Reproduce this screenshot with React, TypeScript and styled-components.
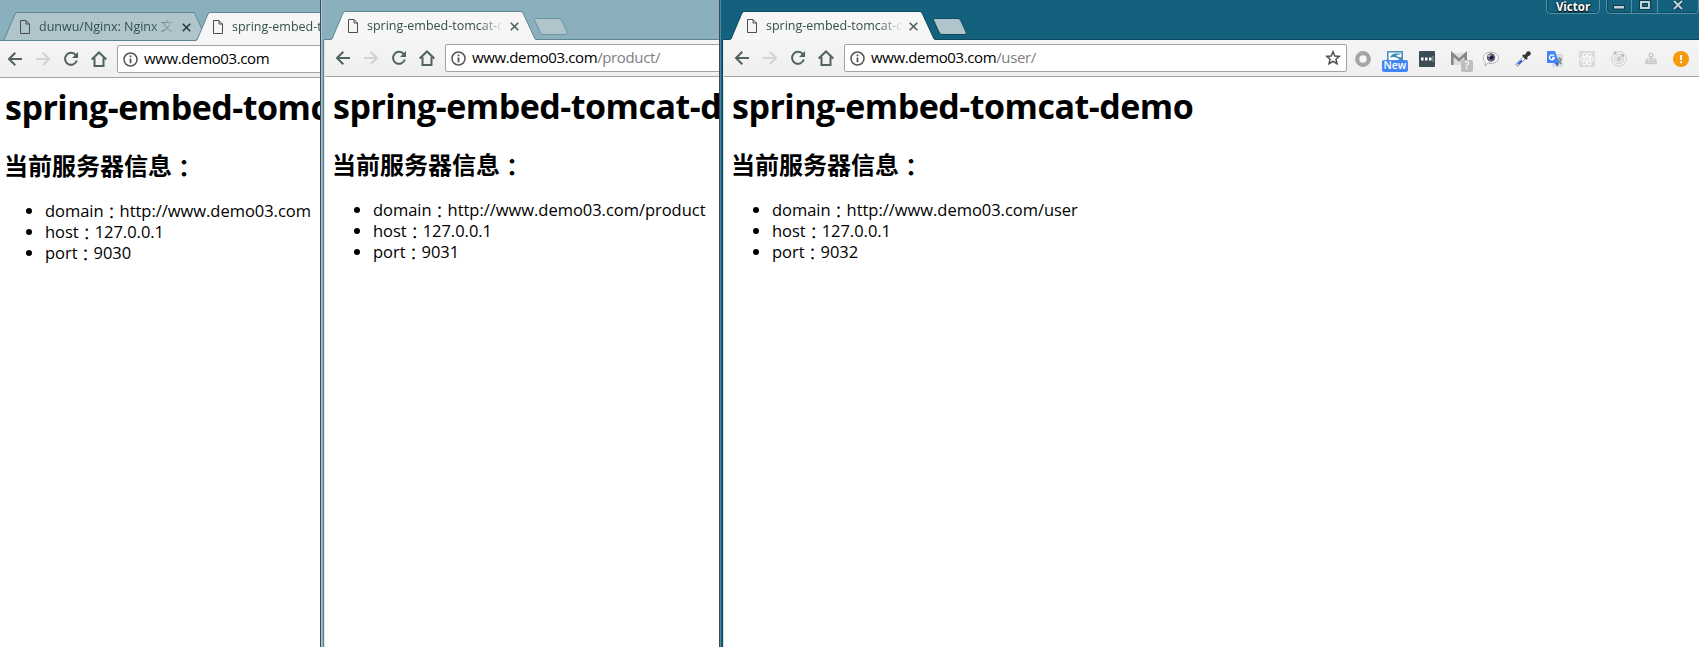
import React from 'react';
import styled, { createGlobalStyle } from 'styled-components';

const GlobalStyle = createGlobalStyle`
  * { box-sizing: border-box; }
  body { margin: 0; background: #fff; overflow: hidden; }
`;

const Desktop = styled.main`
  display: flex;
  width: 1699px;
  height: 647px;
  overflow: hidden;
  font-family: "Open Sans", "Noto Sans CJK TC", sans-serif;
  color: #000;
`;

const BrowserWindow = styled.section<{ $width: number; $edge: string; $shine?: string; $drop?: number }>`
  display: flex;
  flex: none;
  flex-direction: column;
  width: ${p => p.$width}px;
  overflow: hidden;
  background: ${p => p.$edge};
  padding-top: ${p => p.$drop || 0}px;
  border-left: ${p => (p.$shine ? '1px solid #3f4b50' : '0')};
  box-shadow: ${p => (p.$shine ? `inset 1px 0 0 ${p.$shine}` : 'none')};
`;

const TitleBar = styled.header<{ $start: number; $inset: number; $line: string }>`
  display: flex;
  flex: none;
  align-items: flex-end;
  height: 40px;
  margin-left: ${p => p.$inset}px;
  padding-left: ${p => p.$start}px;
  box-shadow: inset 0 -1px 0 ${p => p.$line};
`;

const Tab = styled.div<{ $overlap?: boolean }>`
  display: flex;
  flex: none;
  align-items: center;
  position: relative;
  width: 208px;
  height: 29px;
  padding: 1px 16px 0 18px;
  margin-left: ${p => (p.$overlap ? -15 : 0)}px;
`;

const TabShape = styled.svg`
  position: absolute;
  inset: 0;
`;

const TabIcon = styled.svg`
  position: relative;
  flex: none;
`;

const TabTitle = styled.span`
  position: relative;
  flex: none;
  width: 135px;
  margin-left: 9px;
  overflow: hidden;
  white-space: nowrap;
  font-size: 12.5px;
  line-height: 20px;
  color: #33504c;
  mask-image: linear-gradient(to right, #000 112px, transparent 137px);
`;

const CloseIcon = styled.svg`
  position: relative;
  flex: none;
  margin-left: 8px;
`;

const NewTab = styled.svg`
  flex: none;
  margin: 0 0 5px -5px;
`;

const WindowControls = styled.div`
  display: flex;
  align-self: flex-start;
  gap: 6px;
  margin-left: auto;
`;

const ControlGroup = styled.div<{ $width: number }>`
  display: flex;
  width: ${p => p.$width}px;
  height: 14px;
  border: 1px solid #5590a6;
  border-top: 0;
  border-radius: 0 0 5px 5px;
  box-shadow: inset 0 -1px 0 #0b4a61, inset 1px 0 0 #0b4a61;
`;

const ControlButton = styled.div<{ $wide?: boolean }>`
  display: flex;
  flex: ${p => (p.$wide ? 41 : 25)} 0 0;
  justify-content: center;
  & + & { border-left: 1px solid #5590a6; }
`;

const UserName = styled.span`
  flex: 1;
  text-align: center;
  font-size: 11.5px;
  font-weight: 700;
  line-height: 13px;
  color: #fff;
  text-shadow: 0 0 2px #000, 0 1px 1px #000;
`;

const Body = styled.div<{ $edge?: string }>`
  display: flex;
  flex: 1;
  flex-direction: column;
  overflow: hidden;
  margin-left: ${p => (p.$edge ? 3 : 0)}px;
  border-left: ${p => (p.$edge ? '1px solid #dfe5e7' : '0')};
  box-shadow: ${p => (p.$edge ? `-1px 0 0 ${p.$edge}` : 'none')};
  background: #fff;
`;

const Toolbar = styled.div<{ $start: number }>`
  display: flex;
  flex: none;
  align-items: center;
  height: 37px;
  padding-left: ${p => p.$start}px;
  background: linear-gradient(#f5f5f5, #efefef);
  border-bottom: 1px solid #a3a3a3;
`;

const NavIcon = styled.svg<{ $gap?: number }>`
  flex: none;
  margin-right: ${p => p.$gap ?? 12}px;
`;

const Omnibox = styled.div<{ $width: number }>`
  display: flex;
  flex: none;
  align-items: center;
  width: ${p => p.$width}px;
  height: 28px;
  padding: 0 5px;
  background: #fff;
  border: 1px solid #a3a3a3;
  border-radius: 2px;
`;

const Url = styled.span`
  flex: 1;
  margin: 0 0 2px 6px;
  white-space: nowrap;
  font-size: 15px;
  letter-spacing: -0.38px;
  line-height: 24px;
`;

const UrlPath = styled.span`
  color: #808080;
`;

const Extensions = styled.div`
  display: flex;
  gap: 6px;
  margin-left: 3px;
`;

const Extension = styled.div`
  position: relative;
  width: 26px;
  height: 28px;
  padding: 6px 5px;
  &:last-child { margin-left: -2px; }
`;

const Badge = styled.span<{ $color: string; $left: number; $width: number }>`
  position: absolute;
  left: ${p => p.$left}px;
  top: 16px;
  width: ${p => p.$width}px;
  height: 12px;
  border-radius: 2px;
  background: ${p => p.$color};
  color: #fff;
  font-size: 10.5px;
  font-weight: 600;
  line-height: 11px;
  text-align: center;
`;

const Page = styled.article<{ $left: number }>`
  padding-left: ${p => p.$left}px;
  white-space: nowrap;
`;

const Title = styled.h1`
  margin: 6px 0 0;
  font-size: 34px;
  letter-spacing: -0.5px;
  line-height: 46px;
  font-weight: 700;
`;

const Subtitle = styled.h2`
  height: 32px;
  margin: 19px 0 0 -1px;
  font-family: "Noto Sans CJK SC", sans-serif;
  font-size: 24px;
  line-height: 32px;
  font-weight: 700;
`;

const Colon = styled.span`
  font-family: "Noto Sans CJK TC", sans-serif;
  line-height: 1;
  vertical-align: -2px;
`;

const InfoList = styled.ul`
  margin: 19px 0 0;
  padding-left: 40px;
  font-size: 16.5px;
  letter-spacing: -0.03px;
  line-height: 21px;
`;

const InfoItem = styled.li`
  height: 21px;
  ${Colon} { font-size: 16px; }
`;

type TabInfo = { title: string; active?: boolean };

const BrowserTab = ({ title, active, line, overlap }: TabInfo & { line: string; overlap?: boolean }) => (
  <Tab $overlap={overlap}>
    <TabShape width="208" height="29" viewBox="0 0 208 29">
      <path
        d="M0 29 L2 28 L13 2 Q13.700 .5 15 .5 H191 Q192.300 .5 193 2 L205 28 L207 29 Z"
        fill={active ? '#f6f6f6' : '#b0c4cb'}
      />
      <path
        d={'M0 28.500 L2 28 L13 2 Q13.700 .5 15 .5 H191 Q192.300 .5 193 2 L205 28 L207 28.500' + (active ? '' : ' H0')}
        fill="none"
        stroke={line}
      />
    </TabShape>
    <TabIcon width="10" height="14" viewBox="0 0 10 14">
      <path d="M.5 .5H6L9.500 4V13.500H.5Z M6 .5V4H9.500" fill="none" stroke="#4d4d4d" />
    </TabIcon>
    <TabTitle>{title}</TabTitle>
    <CloseIcon width="9" height="9" viewBox="0 0 9 9">
      <path d="M.7 .7L8.300 8.300M8.300 .7L.7 8.300" stroke={active ? '#4f615d' : '#2d3c3c'} strokeWidth="1.6" />
    </CloseIcon>
  </Tab>
);

const Navigation = () => (
  <>
    <NavIcon width="16" height="16" viewBox="0 0 16 16">
      <path d="M15 8H2.500M8.300 1.700L2 8L8.300 14.300" fill="none" stroke="#50635d" strokeWidth="2" />
    </NavIcon>
    <NavIcon width="16" height="16" viewBox="0 0 16 16">
      <path d="M1 8H13.500M7.700 1.700L14 8L7.700 14.300" fill="none" stroke="#d2d3d2" strokeWidth="2" />
    </NavIcon>
    <NavIcon width="16" height="16" viewBox="0 0 16 16">
      <path d="M12.900 4.300A6 6 0 1 0 13.800 9.500" fill="none" stroke="#50635d" strokeWidth="2" />
      <path d="M15 1V7H9Z" fill="#50635d" />
    </NavIcon>
    <NavIcon width="16" height="16" viewBox="0 0 16 16" $gap={10}>
      <path d="M.7 8.500L8 1.500L15.300 8.500M3.500 7V15H12.500V7" fill="none" stroke="#50635d" strokeWidth="2" />
    </NavIcon>
  </>
);

const InfoIcon = () => (
  <svg width="15" height="15" viewBox="0 0 15 15">
    <circle cx="7.500" cy="7.500" r="6.500" fill="none" stroke="#555" strokeWidth="1.500" />
    <path d="M7.500 3.500V5.200M7.500 6.500V11.300" stroke="#555" strokeWidth="1.800" />
  </svg>
);

const StarIcon = () => (
  <svg width="16" height="16" viewBox="0 0 16 16">
    <path
      d="M8 1.800L9.800 6L14.300 6.300L10.900 9.200L12 13.700L8 11.300L4 13.700L5.100 9.200L1.700 6.300L6.200 6Z"
      fill="none"
      stroke="#484848"
      strokeWidth="1.400"
    />
  </svg>
);

const ExtensionBar = () => (
  <Extensions>
    <Extension>
      <svg width="16" height="16">
        <circle cx="8" cy="8" r="5.800" fill="#f5f5f5" stroke="#a5a5a5" strokeWidth="4.200" />
      </svg>
    </Extension>
    <Extension>
      <svg width="16" height="16">
        <rect x=".8" y=".8" width="14.400" height="14" fill="#fff" stroke="#4b94bd" strokeWidth="1.600" />
        <path d="M15 2.500H9C6 2.500 4 4 3 6.500C6 5.500 11 5.500 13 10H15.500V6.500C13 6.500 10 5.500 9 4.500Z" fill="#3d88b5" />
      </svg>
      <Badge $color="#4285f4" $left={0} $width={26}>New</Badge>
    </Extension>
    <Extension>
      <svg width="16" height="16">
        <rect width="16" height="16" rx="1" fill="#3d4d58" />
        <path d="M2 6.500H4.500V9.500H2ZM6 6.500H8.500V9.500H6ZM10 6.500H12.500V9.500H10Z" fill="#fff" />
        <path d="M14 5V11" stroke="#9aa5ab" />
      </svg>
    </Extension>
    <Extension>
      <svg width="16" height="16">
        <rect y="2" width="16" height="12" fill="#dedede" />
        <path d="M1.300 14V3L8 9L14.700 3V14" fill="none" stroke="#888" strokeWidth="2.600" />
      </svg>
      <Badge $color="#bdbdbd" $left={15} $width={12}>?</Badge>
    </Extension>
    <Extension>
      <svg width="16" height="16">
        <path d="M8 1.300C12 1.300 15.500 3.500 15.500 6.800S12 12.300 8 12.300L5 12L2 15L2.500 11C1 10 .5 8.500 .5 6.800C.5 3.500 4 1.300 8 1.300Z" fill="#fff" stroke="#aaa" />
        <circle cx="8" cy="6.500" r="4.300" fill="#6a6480" />
        <circle cx="8.500" cy="6.500" r="2" fill="#151a38" />
        <circle cx="6.300" cy="4.800" r="1.200" fill="#d8bcb0" />
      </svg>
    </Extension>
    <Extension>
      <svg width="16" height="16">
        <path d="M1.500 14.500L9.500 6.500" stroke="#8d99ab" strokeWidth="3.600" />
        <path d="M2.300 13.700L9 7" stroke="#fff" strokeWidth="2" />
        <path d="M3 13L7 9.500" stroke="#3158d8" strokeWidth="2" />
        <path d="M8 4L12 8" stroke="#333" strokeWidth="2.400" />
        <path d="M10.500 5.500L14 2" stroke="#333" strokeWidth="3.400" />
        <circle cx="13.500" cy="2.500" r="2.300" fill="#333" />
      </svg>
    </Extension>
    <Extension>
      <svg width="16" height="16">
        <rect x="5" y="3" width="11" height="13" fill="#dcdcdc" />
        <path d="M0 0H8L12 12H0Z" fill="#4285f4" />
        <path d="M7.500 12H12L10.500 15.500Z" fill="#2f62c9" />
        <path d="M7 5.200A2.400 2.400 0 1 0 7.200 7H5" fill="none" stroke="#fff" strokeWidth="1.300" />
        <path d="M10 8H15M12.500 6.500V8M14 8C13.500 10.500 12 12 10.500 13M11 9.500L14.500 13" stroke="#68808a" fill="none" strokeWidth="1.200" />
      </svg>
    </Extension>
    <Extension>
      <svg width="16" height="16">
        <rect width="16" height="16" fill="#dadada" />
        <g fill="none" stroke="#f8f8f8" strokeWidth="1.100">
          <ellipse cx="8" cy="8" rx="6.500" ry="2.600" />
          <ellipse cx="8" cy="8" rx="6.500" ry="2.600" transform="rotate(60 8 8)" />
          <ellipse cx="8" cy="8" rx="6.500" ry="2.600" transform="rotate(120 8 8)" />
        </g>
        <circle cx="8" cy="8" r="1.300" fill="#f8f8f8" />
      </svg>
    </Extension>
    <Extension>
      <svg width="16" height="16">
        <g fill="none" stroke="#cfcfcf">
          <circle cx="8" cy="8" r="7.300" />
          <circle cx="8" cy="8" r="4.600" />
        </g>
        <circle cx="8" cy="8" r="2.700" fill="#cfcfcf" />
        <circle cx="4" cy="2" r="1.500" fill="#b8b8b8" />
        <circle cx="11.500" cy="4.500" r="1.500" fill="#b8b8b8" />
      </svg>
    </Extension>
    <Extension>
      <svg width="16" height="16">
        <g fill="none" stroke="#c4c4c4" strokeWidth="1.200">
          <circle cx="8" cy="4.200" r="1.900" />
          <path d="M8 6V10M4 10V8H12V10" />
          <rect x="2.900" y="10.200" width="2.200" height="2.400" />
          <rect x="6.900" y="10.200" width="2.200" height="2.400" />
          <rect x="10.900" y="10.200" width="2.200" height="2.400" />
        </g>
      </svg>
    </Extension>
    <Extension>
      <svg width="16" height="16">
        <circle cx="8" cy="8" r="8" fill="#f59a0b" />
        <path d="M8 4V9M8 10.300V12.300" stroke="#fff" strokeWidth="2" />
      </svg>
    </Extension>
  </Extensions>
);

const Controls = () => (
  <WindowControls>
    <ControlGroup $width={54}>
      <UserName>Victor</UserName>
    </ControlGroup>
    <ControlGroup $width={93}>
      <ControlButton>
        <svg width="12" height="12">
          <rect x=".5" y="5.500" width="11" height="3.500" fill="#bdd3dc" stroke="#123947" />
        </svg>
      </ControlButton>
      <ControlButton>
        <svg width="12" height="12">
          <path d="M.5 .5H11.500V9.500H.5Z M3.500 3.500V6.500H8.500V3.500Z" fill="#bdd3dc" fillRule="evenodd" stroke="#123947" />
        </svg>
      </ControlButton>
      <ControlButton $wide>
        <svg width="12" height="12">
          <path d="M2 1L10 9M10 1L2 9" stroke="#123947" strokeWidth="4" />
          <path d="M2 1L10 9M10 1L2 9" stroke="#bdd3dc" strokeWidth="2" />
        </svg>
      </ControlButton>
    </ControlGroup>
  </WindowControls>
);

const ServerInfo = ({ left, domain, port }: { left: number; domain: string; port: number }) => (
  <Page $left={left}>
    <Title>spring-embed-tomcat-demo</Title>
    <Subtitle>当前服务器信息<Colon>：</Colon></Subtitle>
    <InfoList>
      <InfoItem>domain<Colon>：</Colon>{domain}</InfoItem>
      <InfoItem>host<Colon>：</Colon>127.0.0.1</InfoItem>
      <InfoItem>port<Colon>：</Colon>{port}</InfoItem>
    </InfoList>
  </Page>
);

const NewTabButton = ({ line }: { line: string }) => (
  <NewTab width="36" height="17" viewBox="0 0 36 17">
    <path d="M2.500 .5H26Q28 .5 29 3L34 14Q35 16.500 33 16.500H10Q8 16.500 7 14L1.500 2Q1 .5 2.500 .5Z" fill="#b0c4cb" stroke={line} />
  </NewTab>
);

export default function App() {
  return (
    <>
      <GlobalStyle />
      <Desktop>
        <BrowserWindow $width={320} $edge="#8ab0be" $drop={1}>
          <TitleBar $start={2} $inset={0} $line="#5f8594">
            <BrowserTab title="dunwu/Nginx: Nginx 文档" line="#5f8594" />
            <BrowserTab title="spring-embed-tomcat-demo" active overlap line="#5f8594" />
          </TitleBar>
          <Body>
            <Toolbar $start={7}>
              <Navigation />
              <Omnibox $width={400}>
                <InfoIcon />
                <Url>www.demo03.com</Url>
              </Omnibox>
            </Toolbar>
            <ServerInfo left={5} domain="http://www.demo03.com" port={9030} />
          </Body>
        </BrowserWindow>
        <BrowserWindow $width={399} $edge="#8ab0be" $shine="#a5c6d1">
          <TitleBar $start={6} $inset={3} $line="#5f8594">
            <BrowserTab title="spring-embed-tomcat-demo" active line="#5f8594" />
            <NewTabButton line="#6f929f" />
          </TitleBar>
          <Body $edge="#5f8594">
            <Toolbar $start={10}>
              <Navigation />
              <Omnibox $width={400}>
                <InfoIcon />
                <Url>www.demo03.com<UrlPath>/product/</UrlPath></Url>
              </Omnibox>
            </Toolbar>
            <ServerInfo left={8} domain="http://www.demo03.com/product" port={9031} />
          </Body>
        </BrowserWindow>
        <BrowserWindow $width={980} $edge="#14617d" $shine="#4c8aa0">
          <TitleBar $start={6} $inset={3} $line="#0d4a60">
            <BrowserTab title="spring-embed-tomcat-demo" active line="#0d4a60" />
            <NewTabButton line="#0d4a60" />
            <Controls />
          </TitleBar>
          <Body $edge="#0d4a60">
            <Toolbar $start={10}>
              <Navigation />
              <Omnibox $width={503}>
                <InfoIcon />
                <Url>www.demo03.com<UrlPath>/user/</UrlPath></Url>
                <StarIcon />
              </Omnibox>
              <ExtensionBar />
            </Toolbar>
            <ServerInfo left={8} domain="http://www.demo03.com/user" port={9032} />
          </Body>
        </BrowserWindow>
      </Desktop>
    </>
  );
}
